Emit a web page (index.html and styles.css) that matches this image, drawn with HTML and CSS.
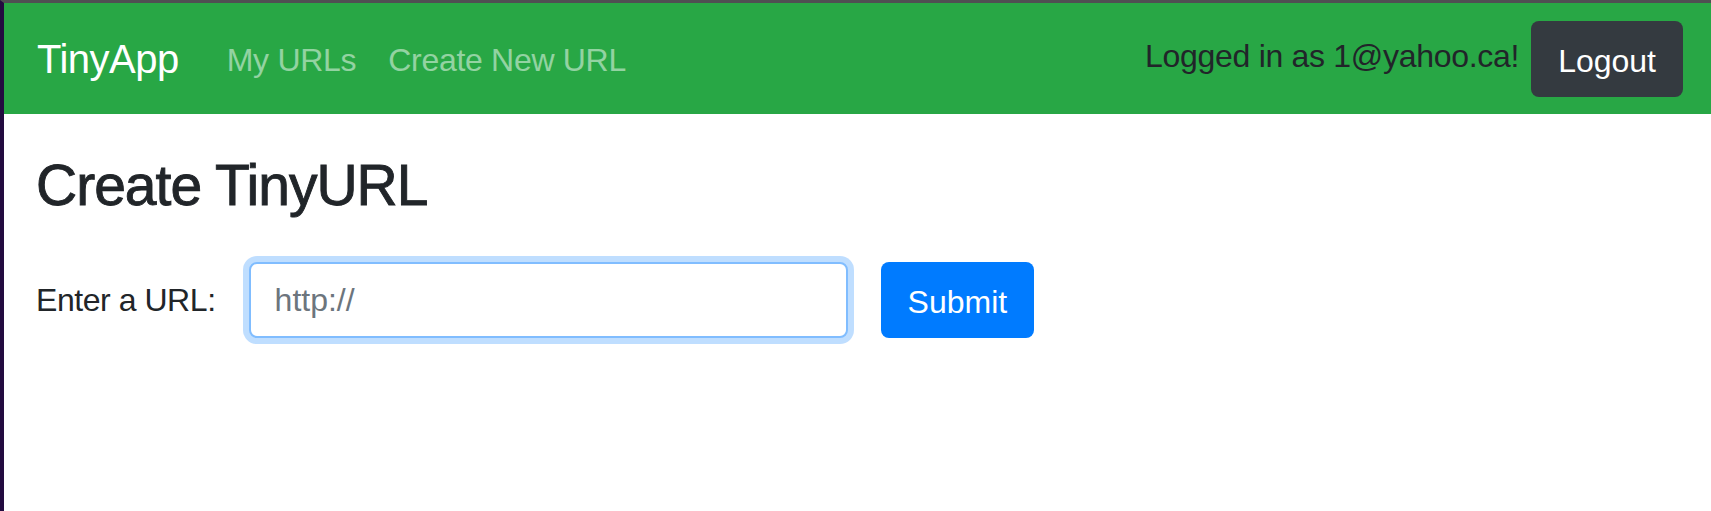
FILE: index.html
```html
<!DOCTYPE html>
<html lang="en">
<head>
<meta charset="utf-8">
<title>TinyApp - Create TinyURL</title>
<link rel="stylesheet" href="styles.css">
</head>
<body>
<div class="screen">
  <nav class="navbar">
    <a class="brand" href="#">TinyApp</a>
    <div class="nav-links">
      <a class="nav-link" href="#">My URLs</a>
      <a class="nav-link" href="#">Create New URL</a>
    </div>
    <div class="nav-user">
      <span class="user-text">Logged in as 1@yahoo.ca!</span>
      <button class="btn btn-dark" type="button">Logout</button>
    </div>
  </nav>
  <main class="content">
    <h1 class="title">Create TinyURL</h1>
    <form class="url-form">
      <label class="url-label" for="longURL">Enter a URL:</label>
      <input class="url-input" id="longURL" type="text" placeholder="http://">
      <button class="btn btn-primary" type="button">Submit</button>
    </form>
  </main>
</div>
</body>
</html>
```

FILE: styles.css
```css
* {
  box-sizing: border-box;
}

html, body {
  margin: 0;
  padding: 0;
  background: #ffffff;
}

body {
  font-family: "Liberation Sans", Arial, sans-serif;
  color: #212529;
}

.screen {
  min-height: 100vh;
  border-top: 3px solid #4f4f52;
  border-left: 4px solid #230b40;
  background: #ffffff;
}

.navbar {
  display: flex;
  align-items: center;
  height: 111px;
  padding: 0 28px 0 33px;
  background: #28a745;
}

.brand {
  font-size: 40px;
  line-height: 60px;
  color: #ffffff;
  text-decoration: none;
  margin-right: 32px;
  letter-spacing: -0.5px;
}

.nav-links {
  display: flex;
  align-items: center;
}

.nav-link {
  font-size: 32px;
  line-height: 48px;
  padding: 2px 16px 0;
  color: rgba(255, 255, 255, 0.5);
  text-decoration: none;
  letter-spacing: -0.3px;
}

.nav-user {
  margin-left: auto;
  display: flex;
  align-items: center;
  gap: 12px;
}

.user-text {
  font-size: 32px;
  line-height: 48px;
  padding-bottom: 6px;
  color: #212529;
  letter-spacing: -0.3px;
}

.btn {
  font-family: "Liberation Sans", Arial, sans-serif;
  font-size: 32px;
  height: 76px;
  line-height: 72px;
  padding: 4px 27px 0;
  border: none;
  border-radius: 8px;
  color: #ffffff;
  cursor: pointer;
}

.btn-dark {
  background: #343a40;
}

.btn-primary {
  background: #007bff;
  margin-left: 33px;
}

.content {
  padding: 0 32px;
}

.title {
  margin: 37px 0 0;
  font-size: 57px;
  line-height: 1.2;
  font-weight: 400;
  color: #212529;
  letter-spacing: -1px;
  -webkit-text-stroke: 0.9px #212529;
}

.url-form {
  display: flex;
  align-items: center;
  margin-top: 43px;
}

.url-label {
  font-size: 32px;
  line-height: 48px;
  margin-right: 33px;
  color: #212529;
  letter-spacing: -0.45px;
}

.url-input {
  width: 599px;
  height: 76px;
  padding: 0 24px;
  font-family: "Liberation Sans", Arial, sans-serif;
  font-size: 32px;
  color: #495057;
  border: 2px solid #80bdff;
  border-radius: 8px;
  background: #ffffff;
  outline: none;
  box-shadow: 0 0 0 6px rgba(0, 123, 255, 0.25);
}

.url-input::placeholder {
  color: #6c757d;
  opacity: 1;
}
```
